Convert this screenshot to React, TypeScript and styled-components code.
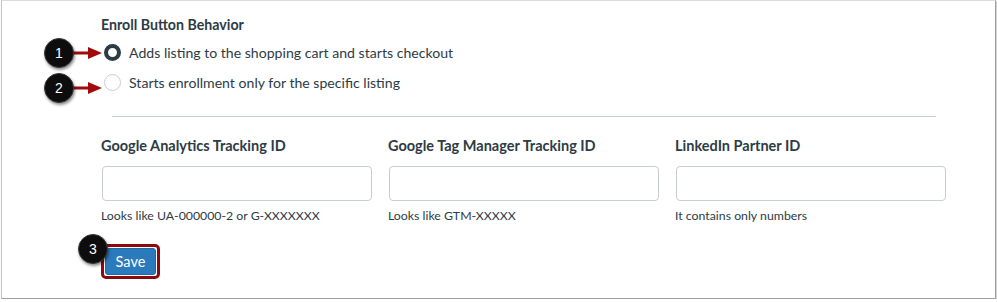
import React, { ReactElement } from 'react';
import styled, { createGlobalStyle } from 'styled-components';

const GlobalStyle = createGlobalStyle`
  html, body {
    margin: 0;
    padding: 0;
    background: #fff;
  }
  body {
    font-family: Lato, 'Liberation Sans', sans-serif;
    color: #2d3b45;
  }
`;

const Panel = styled.div`
  position: relative;
  box-sizing: border-box;
  width: 995px;
  height: 299px;
  margin-left: 1px;
  border: 1px solid #dcdcdc;
  border-left-color: #c4c4c4;
  border-right-color: #9e9e9e;
  border-bottom-color: #9e9e9e;
  box-shadow: 1px 1px 2px rgba(0, 0, 0, 0.25);
  padding: 14px 0 0 99px;
`;

const Heading = styled.div`
  font-size: 14.2px;
  font-weight: 700;
  line-height: 20px;
  margin-bottom: 2px;
`;

const RadioRow = styled.label`
  display: flex;
  align-items: center;
  gap: 8px;
  height: 30px;
  padding-left: 3px;
  font-size: 14.1px;
`;

const RadioDot = styled.span<{ checked: boolean }>`
  box-sizing: border-box;
  width: 17px;
  height: 17px;
  border-radius: 50%;
  background: #fff;
  border: ${props => props.checked ? '4px solid #2d3b45' : '1px solid #c7cdd1'};
`;

const Divider = styled.hr`
  border: none;
  border-top: 1px solid #c7cdd1;
  margin: 19px 0 0 11px;
  width: 824px;
`;

const Fields = styled.div`
  display: grid;
  grid-template-columns: repeat(3, 271px);
  column-gap: 16px;
  margin-top: 19px;
`;

const Field = styled.div`
  display: flex;
  flex-direction: column;
`;

const FieldLabel = styled.div`
  font-size: 14.5px;
  font-weight: 700;
  line-height: 20px;
  margin-bottom: 10px;
`;

const TextInput = styled.input`
  box-sizing: border-box;
  height: 35px;
  width: 270px;
  margin: 0 0 0 1px;
  border: 1px solid #c7cdd1;
  border-radius: 4px;
  background: #fff;
`;

const Help = styled.div`
  font-size: 12.3px;
  line-height: 16px;
  margin-top: 7px;
`;

const SaveOutline = styled.div`
  display: inline-block;
  margin-top: 20px;
  border: 3px solid #8b0a10;
  border-radius: 5px;
  padding: 1px;
`;

const SaveButton = styled.button`
  display: block;
  box-sizing: border-box;
  height: 27px;
  width: 51px;
  border: 1px solid #1f6aa8;
  border-radius: 3px;
  background: #2b7abc;
  color: #fff;
  font-family: Lato, 'Liberation Sans', sans-serif;
  font-size: 14.5px;
  padding: 0;
`;

const Callout = styled.div<{ x: number; y: number }>`
  position: absolute;
  left: ${props => props.x}px;
  top: ${props => props.y}px;
  display: flex;
  align-items: center;
`;

const Bubble = styled.div`
  width: 28px;
  height: 28px;
  border-radius: 50%;
  background: #0d0d0d;
  border: 1px solid #3a3a3a;
  box-shadow: 1px 2px 3px rgba(0, 0, 0, 0.45);
  color: #fff;
  font-family: 'Liberation Sans', Arial, sans-serif;
  font-size: 14px;
  display: flex;
  align-items: center;
  justify-content: center;
  position: relative;
  z-index: 1;
`;

function Arrow(): ReactElement {
  return (
    <svg width="30" height="14" viewBox="0 0 30 14" style={{ marginLeft: -1 }}>
      <line x1="0" y1="7" x2="17" y2="7" stroke="#a00b0b" strokeWidth="3" />
      <polygon points="15,1 29,7 15,13" fill="#a00b0b" />
    </svg>
  );
}

export default function App(): ReactElement {
  const fields = [
    { label: 'Google Analytics Tracking ID', help: 'Looks like UA-000000-2 or G-XXXXXXX' },
    { label: 'Google Tag Manager Tracking ID', help: 'Looks like GTM-XXXXX' },
    { label: 'LinkedIn Partner ID', help: 'It contains only numbers' },
  ];

  return (
    <>
      <GlobalStyle />
      <Panel>
        <Heading>Enroll Button Behavior</Heading>
        <RadioRow>
          <RadioDot checked={ true } />
          Adds listing to the shopping cart and starts checkout
        </RadioRow>
        <RadioRow>
          <RadioDot checked={ false } />
          Starts enrollment only for the specific listing
        </RadioRow>
        <Divider />
        <Fields>
          {
            fields.map(field => (
              <Field key={ field.label }>
                <FieldLabel>{ field.label }</FieldLabel>
                <TextInput />
                <Help>{ field.help }</Help>
              </Field>
            ))
          }
        </Fields>
        <SaveOutline>
          <SaveButton>Save</SaveButton>
        </SaveOutline>

        <Callout x={ 42 } y={ 37 }>
          <Bubble>1</Bubble>
          <Arrow />
        </Callout>
        <Callout x={ 42 } y={ 72 }>
          <Bubble>2</Bubble>
          <Arrow />
        </Callout>
        <Callout x={ 76 } y={ 233 }>
          <Bubble>3</Bubble>
        </Callout>
      </Panel>
    </>
  );
}
